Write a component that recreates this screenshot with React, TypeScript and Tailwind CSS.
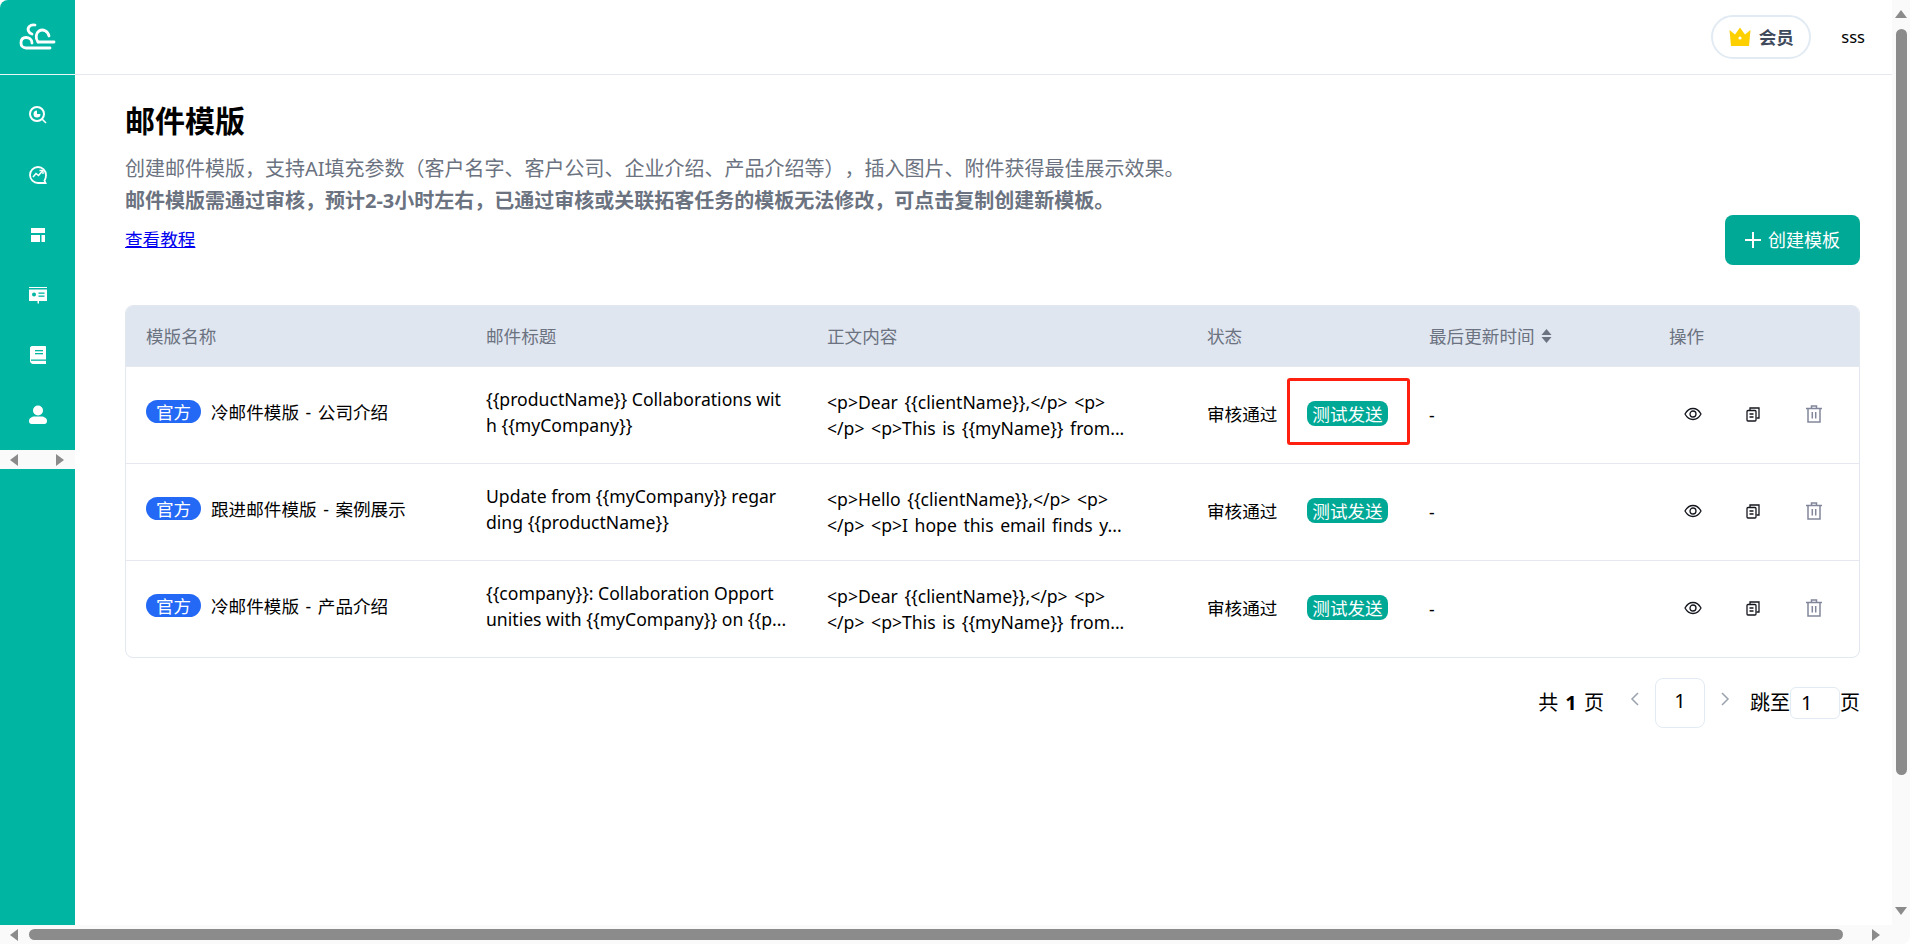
import React from "react";

const rows = [
  {
    name: "冷邮件模版 - 公司介绍",
    subject: ["{{productName}} Collaborations wit", "h {{myCompany}}"],
    body: ["<p>Dear {{clientName}},</p> <p>", "</p> <p>This is {{myName}} from..."],
    marked: true,
  },
  {
    name: "跟进邮件模版 - 案例展示",
    subject: ["Update from {{myCompany}} regar", "ding {{productName}}"],
    body: ["<p>Hello {{clientName}},</p> <p>", "</p> <p>I hope this email finds y..."],
    marked: false,
  },
  {
    name: "冷邮件模版 - 产品介绍",
    subject: ["{{company}}: Collaboration Opport", "unities with {{myCompany}} on {{p..."],
    body: ["<p>Dear {{clientName}},</p> <p>", "</p> <p>This is {{myName}} from..."],
    marked: false,
  },
];

const Logo = () => (
  <svg width="75" height="74" viewBox="0 0 75 74" fill="none" stroke="white" strokeWidth="2.8" strokeLinecap="round">
    <path d="M35 25C30 24 27 28 28.500 31C29 32.500 30.500 33.500 32 34" />
    <path d="M32 43C32 39 29 37.500 26 37.500C22.500 37.500 21 40 21 43C21 46 23 48 26 48H50" />
    <path d="M38 42C35 38 36 33 39 31C43 28.500 48 31 49 36" />
    <path d="M38 42H54" />
  </svg>
);

const SearchNav = () => (
  <svg width="20" height="20" viewBox="0 0 20 20" fill="none" stroke="white">
    <circle cx="9" cy="9" r="7" strokeWidth="2" />
    <path d="M9 5.500A3.500 3.500 0 1 0 12.500 9H9Z" fill="white" stroke="none" />
    <path d="M14 14L18 18" strokeWidth="1.600" />
  </svg>
);

const TrendNav = () => (
  <svg width="20" height="20" viewBox="0 0 20 20" fill="none" stroke="white">
    <path d="M18 10A8 8 0 1 0 10 18H17.500L16.500 15.500C17.500 14 18 12 18 10Z" strokeWidth="1.800" />
    <path d="M5 12L8 8.500L10.500 10.500L14.500 6" strokeWidth="1.600" />
    <path d="M11.500 5.500H15V9" strokeWidth="1.400" />
  </svg>
);

const LayoutNav = () => (
  <svg width="20" height="20" viewBox="0 0 20 20" fill="white">
    <rect x="3" y="3" width="14" height="5" />
    <rect x="3" y="10" width="9" height="7" />
    <rect x="13.500" y="10" width="3.500" height="7" />
  </svg>
);

const CardNav = () => (
  <svg width="20" height="20" viewBox="0 0 20 20" fill="white">
    <rect x="1" y="2" width="18" height="1" />
    <path d="M1 4.500H19V16H11V18.500H9.500V16H1Z" />
    <circle cx="6" cy="9.500" r="2" fill="#00b5a2" />
    <rect x="10.500" y="7.500" width="6" height="1.300" fill="#00b5a2" />
    <rect x="10.500" y="10.500" width="6" height="1.300" fill="#00b5a2" />
  </svg>
);

const BookNav = () => (
  <svg width="20" height="20" viewBox="0 0 20 20" fill="white">
    <path d="M3 1H16C16.600 1 17 1.400 17 2V19H4C2.900 19 1 18 1 16V3C1 2 2 1 3 1Z" transform="translate(1 0)" />
    <rect x="7" y="5" width="8" height="1.300" fill="#00b5a2" />
    <rect x="7" y="8" width="8" height="1.300" fill="#00b5a2" />
    <rect x="3" y="14.500" width="15" height="1.300" fill="#00b5a2" />
  </svg>
);

const UserNav = () => (
  <svg width="20" height="20" viewBox="0 0 20 20" fill="white">
    <circle cx="10" cy="5.500" r="5" />
    <path d="M1 16C1 13 4 11.500 6.500 11.500H13.500C16 11.500 19 13 19 16C19 18 18 19 16.500 19H3.500C2 19 1 18 1 16Z" />
  </svg>
);

const Crown = () => (
  <svg width="22" height="20" viewBox="0 0 22 20">
    <path d="M0.500 3L6 7.500L11 0.500L16 7.500L21.500 3L20 19H2Z" fill="#ffd000" />
    <circle cx="11" cy="11" r="1.600" fill="white" />
  </svg>
);

const Eye = () => (
  <svg width="18" height="14" viewBox="0 0 18 14" fill="none" stroke="#15171f" strokeWidth="1.300">
    <path d="M1 7C3 3.300 5.800 1.500 9 1.500C12.200 1.500 15 3.300 17 7C15 10.700 12.200 12.500 9 12.500C5.800 12.500 3 10.700 1 7Z" />
    <circle cx="9" cy="7" r="3" />
  </svg>
);

const Copy = () => (
  <svg width="14" height="15" viewBox="0 0 14 15" fill="none" stroke="#15171f" strokeWidth="1.300">
    <path d="M4 3V1H13V11H10.500" />
    <rect x="1" y="3.500" width="9" height="10.500" rx="1" />
    <path d="M3.500 7H7.500M3.500 10H7.500" />
  </svg>
);

const Trash = () => (
  <svg width="18" height="18" viewBox="0 0 18 18" fill="none" stroke="#81869a" strokeWidth="1.500">
    <path d="M1 3.500H17" />
    <path d="M6.500 3V1H11.500V3" />
    <path d="M3 3.500V17H15V3.500" />
    <path d="M7.300 7V13.500M10.700 7V13.500" />
  </svg>
);

const Tri = ({ dir }: { dir: "up" | "down" | "left" | "right" }) => {
  const d = {
    up: "M6 1L12 9H0Z",
    down: "M0 1H12L6 9Z",
    left: "M9 0V12L1 6Z",
    right: "M1 0V12L9 6Z",
  }[dir];
  return (
    <svg width="12" height="12" viewBox="0 0 12 12" fill="#8b8b8b">
      <path d={d} />
    </svg>
  );
};

export default function App() {
  return (
    <div className="flex h-[944px] w-[1910px] flex-col overflow-hidden bg-white font-['Noto_Sans','Noto_Sans_CJK_SC',sans-serif] text-[17.6px] text-black [text-spacing-trim:space-all]">
      <div className="flex h-[925px] min-h-0">
        <aside className="flex w-[75px] shrink-0 flex-col rounded-tl-lg bg-[#00b5a2]">
          <div className="h-[75px] shrink-0 border-b border-[#e8f7f5]">
            <Logo />
          </div>
          <nav className="flex flex-col items-center pt-[10px]">
            {[SearchNav, TrendNav, LayoutNav, CardNav, BookNav, UserNav].map((Icon, i) => (
              <div key={i} className="flex h-[60px] items-center justify-center">
                <Icon />
              </div>
            ))}
          </nav>
          <div className="mt-[5px] flex h-[19px] items-center justify-between bg-[#fafafa] pl-[9px] pr-[8px]">
            <Tri dir="left" />
            <Tri dir="right" />
          </div>
        </aside>

        <main className="flex min-w-0 flex-1 flex-col">
          <header className="flex h-[75px] shrink-0 items-center justify-end border-b border-[#e5e9ef] pr-[27px]">
            <div className="flex h-[44px] w-[100px] items-center justify-center gap-[8px] rounded-full border-2 border-[#e2ebf3] text-[17.6px] font-bold text-[#3f4a5c]">
              <Crown />
              <span>会员</span>
            </div>
            <span className="ml-[30px] text-[16.5px] leading-none">sss</span>
          </header>

          <section className="flex flex-col pl-[50px] pr-[32px] pt-[25px]">
            <h1 className="text-[30px] leading-[42px] font-bold">邮件模版</h1>
            <div className="mt-[11px] flex items-start justify-between">
              <div>
                <p className="text-[20px] leading-[32px] text-[#6b7280]">
                  创建邮件模版，支持AI填充参数（客户名字、客户公司、企业介绍、产品介绍等），插入图片、附件获得最佳展示效果。
                </p>
                <p className="text-[20px] leading-[32px] font-bold text-[#6b7280]">
                  邮件模版需通过审核，预计2-3小时左右，已通过审核或关联拓客任务的模板无法修改，可点击复制创建新模板。
                </p>
                <a className="mt-[6px] block text-[17.6px] leading-[32px] text-[#0000ee] underline">查看教程</a>
              </div>
              <button className="mt-[62px] flex h-[50px] w-[135px] items-center justify-center gap-[7px] rounded-lg bg-[#00a896] text-[18px] text-white">
                <svg width="16" height="16" viewBox="0 0 16 16" stroke="white" strokeWidth="2">
                  <path d="M8 0V16M0 8H16" />
                </svg>
                <span>创建模板</span>
              </button>
            </div>

            <div className="mt-[40px] overflow-hidden rounded-lg border border-[#e2e8f0]">
              <div className="grid h-[60px] grid-cols-[339px_340px_380px_222px_240px_1fr] items-center bg-[#e0e6f0] text-[#6b7280]">
                <div className="pl-[20px]">模版名称</div>
                <div className="pl-[21px]">邮件标题</div>
                <div className="pl-[22px]">正文内容</div>
                <div className="pl-[22px]">状态</div>
                <div className="flex items-center gap-[6px] pl-[22px]">
                  最后更新时间
                  <svg width="11" height="16" viewBox="0 0 11 16" fill="#6b7280">
                    <path d="M5.500 1L10.500 7H0.500Z" />
                    <path d="M0.500 9H10.500L5.500 15Z" />
                  </svg>
                </div>
                <div className="pl-[22px]">操作</div>
              </div>

              {rows.map((r, i) => (
                <div
                  key={i}
                  className="grid h-[97px] grid-cols-[339px_340px_380px_222px_240px_1fr] items-center border-t border-[#e5e9ef] first:border-t-0"
                >
                  <div className="flex items-center gap-[10px] pb-[6px] pl-[20px]">
                    <span className="flex h-[23px] w-[55px] items-center justify-center rounded-full bg-[#2469f5] text-white">
                      官方
                    </span>
                    <span className="whitespace-nowrap text-[17.6px] [word-spacing:2px]">{r.name}</span>
                  </div>
                  <div className="pb-[6px] pl-[21px]">
                    {r.subject.map((line) => (
                      <p key={line} className="whitespace-nowrap leading-[26px]">{line}</p>
                    ))}
                  </div>
                  <div className="pl-[22px]">
                    {r.body.map((line) => (
                      <p key={line} className="whitespace-nowrap leading-[26px] [word-spacing:2px]">{line}</p>
                    ))}
                  </div>
                  <div className="relative flex items-center pb-[2px] pl-[22px]">
                    <span className="w-[71px] shrink-0 whitespace-nowrap">审核通过</span>
                    <span className="ml-[29px] flex h-[25px] w-[81px] items-center justify-center rounded-lg bg-[#00a896] text-[17.6px] whitespace-nowrap text-white">
                      测试发送
                    </span>
                    {r.marked && (
                      <div className="absolute left-[102px] top-[-23px] h-[67px] w-[123px] rounded-[3px] border-[3px] border-[#ff2010]" />
                    )}
                  </div>
                  <div className="pl-[22px]">-</div>
                  <div className="flex items-center pb-[2px] pl-[16px]">
                    <div className="flex w-[60px] justify-center"><Eye /></div>
                    <div className="flex w-[60px] justify-center"><Copy /></div>
                    <div className="flex w-[61px] justify-center"><Trash /></div>
                  </div>
                </div>
              ))}
            </div>

            <div className="mt-[20px] flex items-center justify-end text-[20px]">
              <span className="[word-spacing:2px]">共 <b>1</b> 页</span>
              <svg className="ml-[26px] mb-[8px]" width="10" height="14" viewBox="0 0 10 14" fill="none" stroke="#9aa2ad" strokeWidth="1.500">
                <path d="M8 1L2 7L8 13" />
              </svg>
              <div className="ml-[15px] flex h-[50px] w-[50px] items-center justify-center rounded-lg border border-[#e2ebf3] pb-[4px]">
                1
              </div>
              <svg className="ml-[15px] mb-[8px]" width="10" height="14" viewBox="0 0 10 14" fill="none" stroke="#9aa2ad" strokeWidth="1.500">
                <path d="M2 1L8 7L2 13" />
              </svg>
              <span className="ml-[20px]">跳至</span>
              <div className="flex h-[32px] w-[50px] items-center rounded-md border border-[#e2ebf3] pl-[10px]">1</div>
              <span>页</span>
            </div>
          </section>
        </main>

        <div className="flex w-[18px] shrink-0 flex-col items-center bg-[#fafafa] pt-[9px]">
          <Tri dir="up" />
          <div className="mt-[8px] h-[746px] w-[11px] rounded-full bg-[#8b8b8b]" />
          <div className="mt-[131px]"><Tri dir="down" /></div>
        </div>
      </div>

      <div className="flex h-[19px] shrink-0 items-center rounded-br-lg bg-[#fafafa] pl-[9px]">
        <Tri dir="left" />
        <div className="ml-[8px] h-[11px] w-[1814px] rounded-full bg-[#8b8b8b]" />
        <div className="ml-[28px]"><Tri dir="right" /></div>
      </div>
    </div>
  );
}
